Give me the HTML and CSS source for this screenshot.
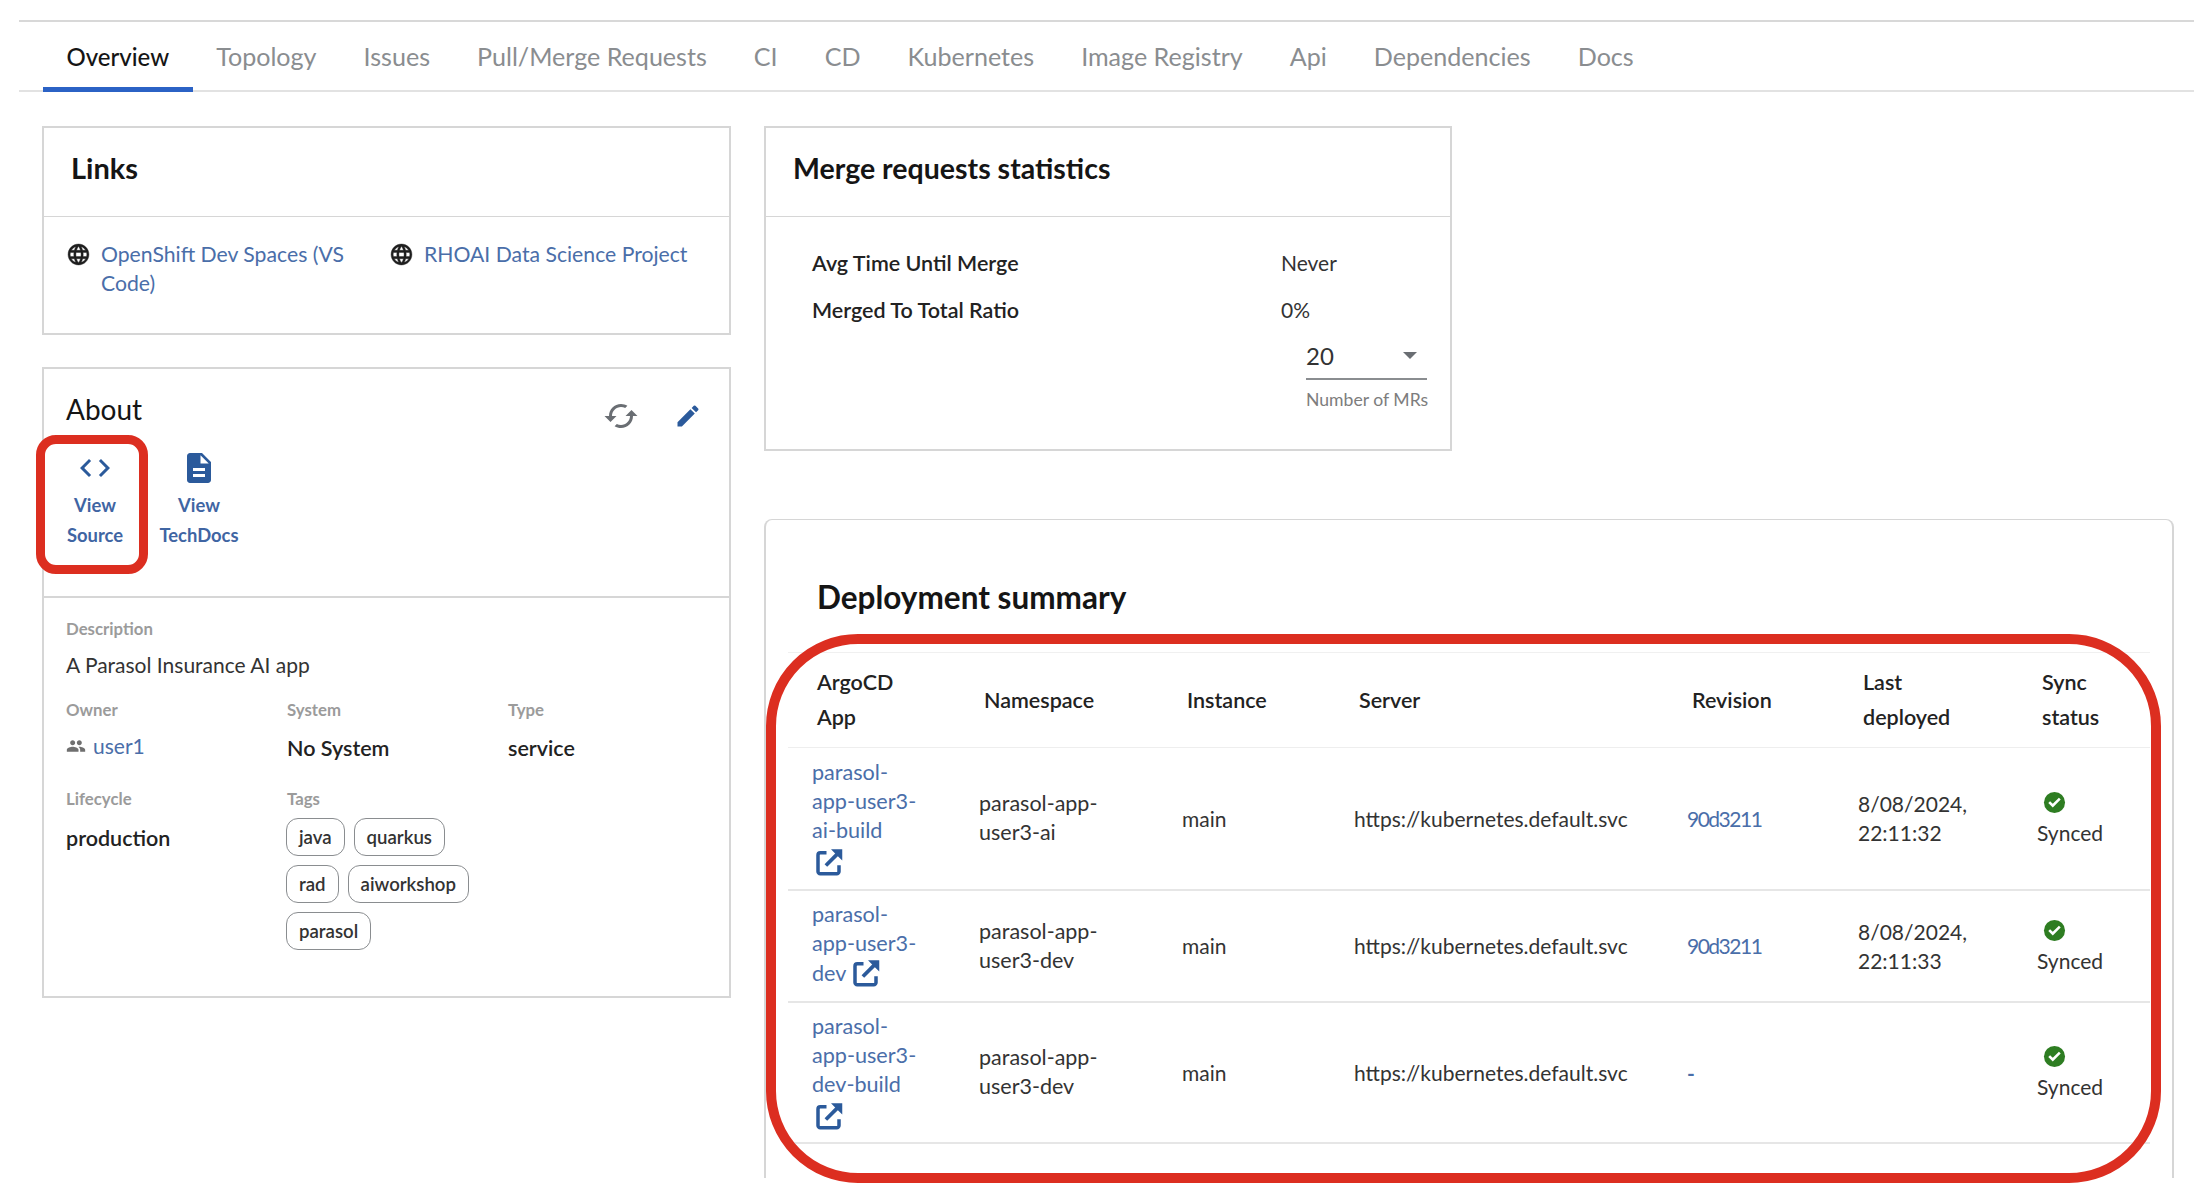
FILE: index.html
```html
<!DOCTYPE html>
<html lang="en">
<head>
<meta charset="utf-8">
<title>Overview</title>
<link rel="stylesheet" href="styles.css">
</head>
<body>
<svg class="defs" width="0" height="0" aria-hidden="true">
  <symbol id="i-globe" viewBox="0 0 24 24"><path d="M11.99 2C6.47 2 2 6.48 2 12s4.47 10 9.99 10C17.52 22 22 17.52 22 12S17.52 2 11.99 2zm6.93 6h-2.95c-.32-1.25-.78-2.45-1.38-3.56 1.84.63 3.37 1.91 4.33 3.56zM12 4.04c.83 1.2 1.48 2.53 1.91 3.96h-3.82c.43-1.43 1.08-2.76 1.91-3.96zM4.26 14C4.1 13.36 4 12.69 4 12s.1-1.36.26-2h3.38c-.08.66-.14 1.32-.14 2 0 .68.06 1.34.14 2H4.26zm.82 2h2.95c.32 1.25.78 2.45 1.38 3.56-1.84-.63-3.37-1.9-4.33-3.56zm2.95-8H5.08c.96-1.66 2.49-2.93 4.33-3.56C8.81 5.55 8.35 6.75 8.03 8zM12 19.96c-.83-1.2-1.48-2.53-1.91-3.96h3.82c-.43 1.43-1.08 2.76-1.91 3.96zM14.34 14H9.66c-.09-.66-.16-1.32-.16-2 0-.68.07-1.35.16-2h4.68c.09.65.16 1.32.16 2 0 .68-.07 1.34-.16 2zm.25 5.56c.6-1.11 1.06-2.31 1.38-3.56h2.95c-.96 1.65-2.49 2.93-4.33 3.56zM16.36 14c.08-.66.14-1.32.14-2 0-.68-.06-1.34-.14-2h3.38c.16.64.26 1.31.26 2s-.1 1.36-.26 2h-3.38z"/></symbol>
  <symbol id="i-open" viewBox="0 0 24 24"><path class="open-box" d="M10 4.5H5A1.8 1.8 0 0 0 3.2 6.3v13.2A1.8 1.8 0 0 0 5 21.3h13.2a1.8 1.8 0 0 0 1.8-1.8V14.5"/><path class="open-line" d="M9.5 14.8 19 5.3"/><path d="M13.6 1.8h9v9l-3.3-3.3-2.4-2.4z"/></symbol>
  <symbol id="i-check" viewBox="0 0 24 24"><circle cx="12" cy="12" r="11"/><path class="check-mark" d="M10.2 17.2 5.5 12.5l1.9-1.9 2.8 2.8 6.4-6.4 1.9 1.9z"/></symbol>
</svg>

<div class="page">
  <nav class="tabs">
    <a class="tab tab-active">Overview</a>
    <a class="tab">Topology</a>
    <a class="tab">Issues</a>
    <a class="tab">Pull/Merge Requests</a>
    <a class="tab">CI</a>
    <a class="tab">CD</a>
    <a class="tab">Kubernetes</a>
    <a class="tab">Image Registry</a>
    <a class="tab">Api</a>
    <a class="tab">Dependencies</a>
    <a class="tab">Docs</a>
  </nav>

  <main class="content">
    <div class="col-left">
      <section class="card card-links">
        <h2 class="card-title">Links</h2>
        <div class="links-body">
          <div class="link-item link-item-first">
            <svg class="icon-globe"><use href="#i-globe"/></svg>
            <a class="link">OpenShift Dev Spaces (VS Code)</a>
          </div>
          <div class="link-item">
            <svg class="icon-globe"><use href="#i-globe"/></svg>
            <a class="link">RHOAI Data Science Project</a>
          </div>
        </div>
      </section>

      <section class="card card-about">
        <div class="about-head">
          <div class="about-top">
            <h2 class="about-title">About</h2>
            <div class="about-actions">
              <svg class="icon-refresh" viewBox="0 0 24 24"><path d="M19 8l-4 4h3c0 3.31-2.69 6-6 6-1.01 0-1.97-.25-2.8-.7l-1.46 1.46C8.97 19.54 10.43 20 12 20c4.42 0 8-3.58 8-8h3l-4-4zM6 12c0-3.31 2.69-6 6-6 1.01 0 1.97.25 2.8.7l1.46-1.46C15.03 4.46 13.57 4 12 4c-4.42 0-8 3.58-8 8H1l4 4 4-4H6z"/></svg>
              <svg class="icon-edit" viewBox="0 0 24 24"><path d="M3 17.25V21h3.75L17.81 9.94l-3.75-3.75L3 17.25zM20.71 7.04c.39-.39.39-1.02 0-1.41l-2.34-2.34a.9959.9959 0 0 0-1.41 0l-1.83 1.83 3.75 3.75 1.83-1.83z"/></svg>
            </div>
          </div>
          <div class="about-links">
            <a class="about-link">
              <svg class="icon-about" viewBox="0 0 24 24"><path d="M9.4 16.6 4.8 12l4.6-4.6L8 6l-6 6 6 6 1.4-1.4zm5.2 0 4.6-4.6-4.6-4.6L16 6l6 6-6 6-1.4-1.4z"/></svg>
              <span>View<br>Source</span>
            </a>
            <a class="about-link">
              <svg class="icon-about" viewBox="0 0 24 24"><path d="M14 2H6c-1.1 0-1.99.9-1.99 2L4 20c0 1.1.89 2 1.99 2H18c1.1 0 2-.9 2-2V8l-6-6zm2 16H8v-2h8v2zm0-4H8v-2h8v2zm-3-5V3.5L18.5 9H13z"/></svg>
              <span>View<br>TechDocs</span>
            </a>
          </div>
        </div>
        <div class="about-body">
          <div class="field field-wide">
            <div class="field-label">Description</div>
            <div class="field-text">A Parasol Insurance AI app</div>
          </div>
          <div class="field">
            <div class="field-label">Owner</div>
            <div class="owner">
              <svg class="icon-people" viewBox="0 0 24 24"><path d="M16 11c1.66 0 2.99-1.34 2.99-3S17.66 5 16 5c-1.66 0-3 1.34-3 3s1.34 3 3 3zm-8 0c1.66 0 2.99-1.34 2.99-3S9.66 5 8 5C6.34 5 5 6.34 5 8s1.34 3 3 3zm0 2c-2.33 0-7 1.17-7 3.5V19h14v-2.5c0-2.33-4.67-3.5-7-3.5zm8 0c-.29 0-.62.02-.97.05 1.16.84 1.97 1.97 1.97 3.45V19h6v-2.5c0-2.33-4.67-3.5-7-3.5z"/></svg>
              <a class="link">user1</a>
            </div>
          </div>
          <div class="field">
            <div class="field-label">System</div>
            <div class="field-value">No System</div>
          </div>
          <div class="field">
            <div class="field-label">Type</div>
            <div class="field-value">service</div>
          </div>
          <div class="field field-low">
            <div class="field-label">Lifecycle</div>
            <div class="field-value field-value-life">production</div>
          </div>
          <div class="field field-low field-tags">
            <div class="field-label">Tags</div>
            <div class="tags">
              <span class="tag">java</span><span class="tag">quarkus</span><span class="tag">rad</span><span class="tag">aiworkshop</span><span class="tag">parasol</span>
            </div>
          </div>
        </div>
      </section>
    </div>

    <div class="col-right">
      <section class="card card-merge">
        <h2 class="card-title card-title-strong">Merge requests statistics</h2>
        <div class="merge-body">
          <div class="stat"><span class="stat-label">Avg Time Until Merge</span><span class="stat-value">Never</span></div>
          <div class="stat"><span class="stat-label">Merged To Total Ratio</span><span class="stat-value">0%</span></div>
          <div class="select-wrap">
            <div class="select"><span>20</span><span class="select-arrow"></span></div>
            <div class="select-help">Number of MRs</div>
          </div>
        </div>
      </section>

      <section class="card card-deploy">
        <h2 class="deploy-title">Deployment summary</h2>
        <table class="deploy-table">
          <colgroup>
            <col class="c1"><col class="c2"><col class="c3"><col class="c4"><col class="c5"><col class="c6"><col class="c7">
          </colgroup>
          <thead>
            <tr>
              <th>ArgoCD<br>App</th>
              <th>Namespace</th>
              <th>Instance</th>
              <th>Server</th>
              <th>Revision</th>
              <th>Last<br>deployed</th>
              <th>Sync<br>status</th>
            </tr>
          </thead>
          <tbody>
            <tr>
              <td class="cell-app"><a class="link">parasol-<br>app-user3-<br>ai-build<svg class="icon-open icon-open-block"><use href="#i-open"/></svg></a></td>
              <td class="cell-ns">parasol-app-<br>user3-ai</td>
              <td>main</td>
              <td>https://kubernetes.default.svc</td>
              <td><a class="link rev">90d3211</a></td>
              <td>8/08/2024,<br>22:11:32</td>
              <td class="sync"><svg class="icon-check"><use href="#i-check"/></svg><br>Synced</td>
            </tr>
            <tr>
              <td class="cell-app"><a class="link">parasol-<br>app-user3-<br>dev <svg class="icon-open"><use href="#i-open"/></svg></a></td>
              <td class="cell-ns">parasol-app-<br>user3-dev</td>
              <td>main</td>
              <td>https://kubernetes.default.svc</td>
              <td><a class="link rev">90d3211</a></td>
              <td>8/08/2024,<br>22:11:33</td>
              <td class="sync"><svg class="icon-check"><use href="#i-check"/></svg><br>Synced</td>
            </tr>
            <tr>
              <td class="cell-app"><a class="link">parasol-<br>app-user3-<br>dev-build<svg class="icon-open icon-open-block"><use href="#i-open"/></svg></a></td>
              <td class="cell-ns">parasol-app-<br>user3-dev</td>
              <td>main</td>
              <td>https://kubernetes.default.svc</td>
              <td><a class="link link-dash">-</a></td>
              <td></td>
              <td class="sync"><svg class="icon-check"><use href="#i-check"/></svg><br>Synced</td>
            </tr>
          </tbody>
        </table>
      </section>
    </div>
  </main>

  <div class="mark mark-source"></div>
  <div class="mark mark-table"></div>
</div>
</body>
</html>
```
FILE: styles.css
```css
* { box-sizing: border-box; }
html, body { margin: 0; padding: 0; background: #fff; }
body {
  font-family: "Lato", "Liberation Sans", sans-serif;
  color: #333;
  font-size: 21px;
}
h2 { margin: 0; font: inherit; }
.defs { position: absolute; }

.page {
  position: relative;
  width: 2194px;
  height: 1200px;
  overflow: hidden;
  padding-top: 20px;
}

.tabs {
  display: flex;
  margin-left: 19px;
  padding-left: 24px;
  height: 72px;
  border-top: 2px solid #d8d8d8;
  border-bottom: 2px solid #e2e2e2;
}
.tab {
  display: flex;
  align-items: center;
  padding: 2px 23.5px 0;
  font-size: 25.1px;
  color: #8a8d90;
  margin-bottom: -2px;
  border-bottom: 5px solid transparent;
}
.tab-active { color: #151515; font-size: 24px; font-weight: 500; padding-top: 3px; border-bottom-color: #2b62c5; }

.content {
  display: flex;
  align-items: flex-start;
  gap: 33px;
  padding: 34px 20px 0 42px;
}
.col-left { width: 689px; display: flex; flex-direction: column; gap: 32px; }
.col-right { flex: 1; display: flex; flex-direction: column; }

.card { border: 2px solid #d6d6d6; background: #fff; }
.card-title {
  height: 89px;
  display: flex;
  align-items: center;
  padding: 0 0 9px 27px;
  font-size: 29px;
  font-weight: 700;
  color: #151515;
  border-bottom: 1px solid #d6d6d6;
}
.link { color: #4a6ea9; text-decoration: none; }
.link-dash { font-weight: 700; }

.links-body {
  display: flex;
  gap: 29px;
  padding: 23px 22px 0;
  height: 116px;
  line-height: 29px;
}
.link-item { display: flex; gap: 10px; font-size: 21.2px; }
.link-item-first { width: 294px; }
.icon-globe { width: 25px; height: 25px; flex: none; margin-top: 2px; fill: #1e1e1e; stroke: #1e1e1e; stroke-width: .4; }

.card-about { height: 631px; }
.about-head { height: 229px; padding: 21px 22px 0; border-bottom: 2px solid #d6d6d6; }
.about-top { display: flex; justify-content: space-between; align-items: flex-start; }
.about-title { font-size: 28px; line-height: 38px; color: #151515; }
.about-actions { display: flex; align-items: center; gap: 35px; padding: 8px 5px 0 0; }
.icon-refresh { width: 36px; height: 36px; fill: #6a6e73; }
.icon-edit { width: 28px; height: 28px; fill: #2b5a9b; }
.about-links { display: flex; gap: 46px; padding: 16px 0 0 0; }
.about-link {
  display: flex;
  flex-direction: column;
  align-items: center;
  width: 58px;
  color: #3f65a3;
  font-size: 18.4px;
  font-weight: 700;
  line-height: 30px;
  text-align: center;
}
.icon-about { width: 36px; height: 36px; fill: #2b5a9b; flex: none; margin-bottom: 4px; }
.about-link span { white-space: nowrap; }

.about-body {
  display: grid;
  grid-template-columns: 221px 221px 1fr;
  padding: 21px 22px 0;
  row-gap: 20px;
}
.field-wide { grid-column: 1 / -1; }
.field-low { margin-top: 5.5px; }
.field-label { font-size: 16.8px; font-weight: 700; color: #9b9b9b; line-height: 20px; }
.field-text { font-size: 21px; line-height: 30px; margin-top: 11px; }
.field-value { font-size: 21.5px; font-weight: 600; color: #222; line-height: 30px; margin-top: 13px; }
.field-value-life { margin-top: 14px; }
.owner { display: flex; align-items: center; gap: 7px; margin-top: 11px; line-height: 30px; }
.icon-people { width: 20px; height: 20px; fill: #6f6f6f; }
.field-tags { grid-column: 2 / -1; }
.tags { display: flex; flex-wrap: wrap; gap: 9px; width: 190px; margin: 9px 0 0 -1px; }
.tag {
  height: 38px;
  display: flex;
  align-items: center;
  padding: 0 12px;
  border: 1.5px solid #8a8d90;
  border-radius: 12px;
  font-size: 18.6px;
  font-weight: 600;
}

.card-merge { height: 325px; width: 688px; }
.card-title-strong { font-size: 28.5px; padding-bottom: 8px; }
.merge-body { padding: 29px 30px 0 46px; }
.stat { display: flex; height: 46.5px; font-size: 21px; line-height: 34px; }
.stat-label { width: 469px; font-size: 21.5px; font-weight: 600; color: #222; }
.select-wrap { width: 121px; margin: -1px 0 0 494px; }
.select {
  display: flex;
  align-items: center;
  justify-content: space-between;
  height: 42px;
  border-bottom: 2px solid #8a8d90;
  font-size: 24px;
  padding-right: 10px;
  padding-bottom: 5px;
}
.select-arrow {
  width: 0;
  height: 0;
  border-left: 7px solid transparent;
  border-right: 7px solid transparent;
  border-top: 7px solid #6a6e73;
}
.select-help { margin-top: 9px; font-size: 17.6px; color: #7d7d7d; white-space: nowrap; }

.card-deploy {
  width: 1410px;
  height: 659px;
  margin-top: 68px;
  border-width: 1.5px 2px 0 2px;
  border-radius: 8px 8px 0 0;
  padding: 0 22px 0 22px;
}
.deploy-title {
  height: 132px;
  padding: 57px 0 0 29px;
  font-size: 31.5px;
  font-weight: 700;
  line-height: 40px;
  color: #151515;
}
.deploy-table {
  table-layout: fixed;
  width: 1362px;
  border-collapse: collapse;
  font-size: 21px;
  line-height: 29px;
}
.c1 { width: 167px; } .c2 { width: 203px; } .c3 { width: 172px; } .c4 { width: 333px; }
.c5 { width: 171px; } .c6 { width: 179px; } .c7 { width: 137px; }
.deploy-table th {
  text-align: left;
  font-size: 21.5px;
  font-weight: 600;
  line-height: 35px;
  padding: 12px 0 12px 29px;
  color: #222;
  border-top: 1px solid #f0f0f0;
  border-bottom: 1px solid #eeeeee;
  height: 95px;
}
.deploy-table td {
  padding: 0 0 0 24px;
  vertical-align: middle;
  border-bottom: 2px solid #e6e6e6;
}
.deploy-table .cell-app { vertical-align: top; padding-top: 9.5px; font-size: 21.6px; }
.deploy-table .cell-ns { font-size: 21.5px; }
.deploy-table tbody tr:nth-child(1) { height: 142px; }
.deploy-table tbody tr:nth-child(2) { height: 112px; }
.deploy-table tbody tr:nth-child(3) { height: 141px; }
.rev { letter-spacing: -1.5px; }
.icon-open { width: 30px; height: 30px; fill: #2b5a9b; vertical-align: -7px; }
.icon-open-block { display: block; margin: 2px 0 0 2px; }
.open-box { fill: none; stroke: #2b5a9b; stroke-width: 2.8; }
.open-line { fill: none; stroke: #2b5a9b; stroke-width: 3; }
.icon-check { width: 23px; height: 23px; fill: #2e7d22; margin-left: 6px; vertical-align: -2px; }
.check-mark { fill: #fff; }

.mark { position: absolute; border: 9px solid #dc2e20; pointer-events: none; }
.mark-source { left: 36px; top: 435px; width: 112px; height: 139px; border-radius: 20px; }
.mark-table { left: 766px; top: 634px; width: 1395px; height: 549px; border-radius: 92px; border-width: 10px; }
```
